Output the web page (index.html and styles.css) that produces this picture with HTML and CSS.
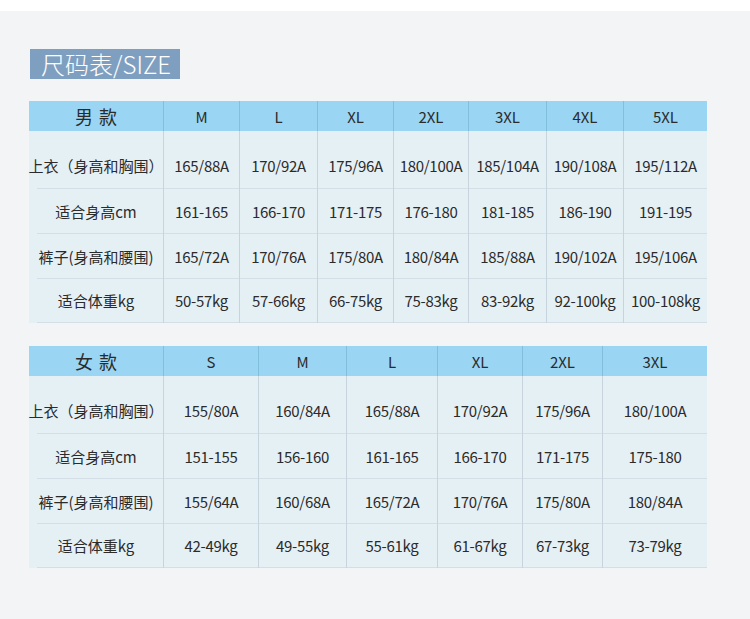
FILE: index.html
```html
<!DOCTYPE html>
<html lang="zh">
<head>
<meta charset="utf-8">
<title>尺码表/SIZE</title>
<link rel="stylesheet" href="styles.css">
</head>
<body>
<div class="page">
  <div class="title">尺码表/SIZE</div>

  <div class="table men">
    <div class="row head">
      <div class="cell label">男&nbsp;款</div>
      <div class="cell">M</div><div class="cell">L</div><div class="cell">XL</div><div class="cell">2XL</div><div class="cell">3XL</div><div class="cell">4XL</div><div class="cell">5XL</div>
    </div>
    <div class="row r1">
      <div class="cell label">上衣（身高和胸围）</div>
      <div class="cell">165/88A</div><div class="cell">170/92A</div><div class="cell">175/96A</div><div class="cell">180/100A</div><div class="cell">185/104A</div><div class="cell">190/108A</div><div class="cell">195/112A</div>
    </div>
    <div class="row r2">
      <div class="cell label">适合身高cm</div>
      <div class="cell">161-165</div><div class="cell">166-170</div><div class="cell">171-175</div><div class="cell">176-180</div><div class="cell">181-185</div><div class="cell">186-190</div><div class="cell">191-195</div>
    </div>
    <div class="row r2">
      <div class="cell label">裤子(身高和腰围)</div>
      <div class="cell">165/72A</div><div class="cell">170/76A</div><div class="cell">175/80A</div><div class="cell">180/84A</div><div class="cell">185/88A</div><div class="cell">190/102A</div><div class="cell">195/106A</div>
    </div>
    <div class="row r4">
      <div class="cell label">适合体重kg</div>
      <div class="cell">50-57kg</div><div class="cell">57-66kg</div><div class="cell">66-75kg</div><div class="cell">75-83kg</div><div class="cell">83-92kg</div><div class="cell">92-100kg</div><div class="cell">100-108kg</div>
    </div>
  </div>

  <div class="table women">
    <div class="row head">
      <div class="cell label">女&nbsp;款</div>
      <div class="cell">S</div><div class="cell">M</div><div class="cell">L</div><div class="cell">XL</div><div class="cell">2XL</div><div class="cell">3XL</div>
    </div>
    <div class="row r1">
      <div class="cell label">上衣（身高和胸围）</div>
      <div class="cell">155/80A</div><div class="cell">160/84A</div><div class="cell">165/88A</div><div class="cell">170/92A</div><div class="cell">175/96A</div><div class="cell">180/100A</div>
    </div>
    <div class="row r2">
      <div class="cell label">适合身高cm</div>
      <div class="cell">151-155</div><div class="cell">156-160</div><div class="cell">161-165</div><div class="cell">166-170</div><div class="cell">171-175</div><div class="cell">175-180</div>
    </div>
    <div class="row r2">
      <div class="cell label">裤子(身高和腰围)</div>
      <div class="cell">155/64A</div><div class="cell">160/68A</div><div class="cell">165/72A</div><div class="cell">170/76A</div><div class="cell">175/80A</div><div class="cell">180/84A</div>
    </div>
    <div class="row r4">
      <div class="cell label">适合体重kg</div>
      <div class="cell">42-49kg</div><div class="cell">49-55kg</div><div class="cell">55-61kg</div><div class="cell">61-67kg</div><div class="cell">67-73kg</div><div class="cell">73-79kg</div>
    </div>
  </div>
</div>
</body>
</html>
```

FILE: styles.css
```css
html, body {
  margin: 0;
  padding: 0;
  background: #ffffff;
}

body {
  font-family: "Noto Sans CJK SC", "Noto Sans", sans-serif;
  color: #2b2b2b;
}

.page {
  margin-top: 11px;
  height: 608px;
  box-sizing: border-box;
  background: #f3f4f6;
  padding: 38px 0 0 29px;
}

.title {
  display: inline-block;
  margin-left: 1px;
  height: 30px;
  line-height: 30px;
  padding: 0 9px 0 11px;
  background: #7f9fc1;
  color: #ffffff;
  font-size: 24px;
  font-weight: 300;
}

.table {
  width: 678px;
  margin-top: 22px;
  background: #e5f0f5;
}

.table.women {
  margin-top: 23px;
}

.row {
  display: grid;
  box-sizing: border-box;
  background-image: linear-gradient(#d3dee6, #d3dee6);
  background-repeat: no-repeat;
  background-size: calc(100% - 8px) 1px;
  background-position: right bottom;
}

.men .row {
  grid-template-columns: 134px 76px 78px 76px 75px 78px 77px 84px;
}

.women .row {
  grid-template-columns: 134px 95px 88px 91px 85px 80px 105px;
}

.cell {
  display: flex;
  align-items: center;
  justify-content: center;
  white-space: nowrap;
  font-size: 15px;
  letter-spacing: -0.3px;
  border-left: 1px solid #c8d4dd;
  box-sizing: border-box;
}

.cell.label {
  border-left: none;
  letter-spacing: 0;
}

.row.head {
  height: 30px;
  background: #9ad6f3;
}

.row.head .cell {
  border-left-color: #82bfdd;
  letter-spacing: 0;
}

.row.head .cell.label {
  font-size: 18px;
  word-spacing: 2px;
}

.row.r1 {
  height: 58px;
}

.row.r1 .cell {
  padding-top: 11px;
  padding-bottom: 1px;
}

.row.r2 {
  height: 45px;
}

.row.r2 .cell {
  padding-bottom: 1px;
}

.row.r4 {
  height: 44px;
}

.row.r4 .cell {
  padding-bottom: 1px;
}
```
